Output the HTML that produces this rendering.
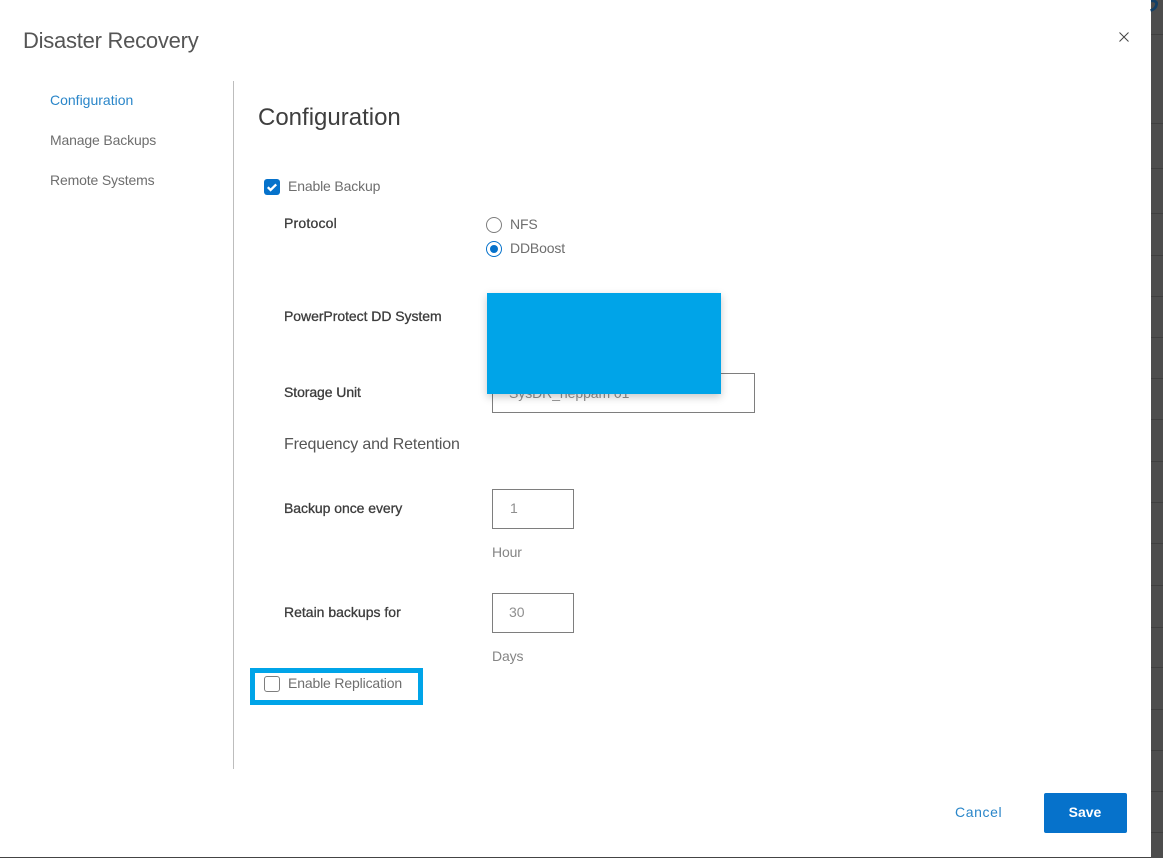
<!DOCTYPE html>
<html lang="en"><head><meta charset="utf-8"><title>Disaster Recovery</title>
<style>
html,body{margin:0;padding:0;width:1163px;height:858px;overflow:hidden;background:#fff;font-family:"Liberation Sans",sans-serif}
.a{position:absolute;white-space:nowrap;line-height:20px}
.g{color:#6e6e6e;font-size:14px;letter-spacing:-.15px}
.b{color:#3c3c3c;font-size:14px;font-weight:normal;-webkit-text-stroke:.3px #3c3c3c}
.box{position:absolute;border:1px solid #7e7e7e;box-sizing:border-box;background:#fff}
.l{position:absolute;left:1151px;width:12px;height:1px;background:#3f3f3f}
</style></head><body>
<div style="position:absolute;left:1151px;top:0;width:12px;height:858px;background:#4d4d4d"></div>
<div class="l" style="top:34px"></div><div class="l" style="top:123px"></div><div class="l" style="top:168px"></div><div class="l" style="top:213px"></div><div class="l" style="top:255px"></div><div class="l" style="top:296px"></div><div class="l" style="top:337px"></div><div class="l" style="top:378px"></div><div class="l" style="top:419px"></div><div class="l" style="top:461px"></div><div class="l" style="top:502px"></div><div class="l" style="top:543px"></div><div class="l" style="top:585px"></div><div class="l" style="top:627px"></div><div class="l" style="top:667px"></div><div class="l" style="top:709px"></div><div class="l" style="top:750px"></div><div class="l" style="top:791px"></div><div class="l" style="top:832px"></div>
<svg style="position:absolute;left:1147px;top:0" width="14" height="14" viewBox="0 0 14 14"><path d="M4 .8C8 .5 10 2 9.6 4.2C9.2 6.8 8 9.2 3.6 10.6" stroke="#123f66" stroke-width="2.8" fill="none"/></svg>
<div style="position:absolute;left:0;top:857px;width:1151px;height:1px;background:#444"></div>

<div class="a" style="left:23px;top:27px;line-height:28px;font-size:22px;color:#555;letter-spacing:-.25px">Disaster Recovery</div>
<svg style="position:absolute;left:1118px;top:31px" width="12" height="12" viewBox="0 0 12 12"><path d="M1.5 1.5L10.5 10.5M10.5 1.5L1.5 10.5" stroke="#444" stroke-width="1" fill="none"/></svg>

<div class="a" style="left:50px;top:90px;font-size:14px;color:#2a86c9">Configuration</div>
<div class="a g" style="left:50px;top:130px">Manage Backups</div>
<div class="a g" style="left:50px;top:170px">Remote Systems</div>
<div style="position:absolute;left:233px;top:81px;width:1px;height:688px;background:#bdbdbd"></div>

<div class="a" style="left:258px;top:103px;line-height:30px;font-size:24px;color:#3e3e3e">Configuration</div>

<div style="position:absolute;left:264px;top:179px;width:16px;height:16px;border-radius:3px;background:#0672cb"></div>
<svg style="position:absolute;left:264px;top:179px" width="16" height="16" viewBox="0 0 16 16"><path d="M3.8 8.2L6.6 11L12.2 5.4" stroke="#fff" stroke-width="2.3" fill="none"/></svg>
<div class="a g" style="left:288px;top:176px">Enable Backup</div>

<div class="a b" style="left:284px;top:213px;letter-spacing:.2px">Protocol</div>
<svg style="position:absolute;left:486px;top:216px" width="18" height="42" viewBox="0 0 18 42"><circle cx="8" cy="9" r="7.5" fill="#fff" stroke="#7e7e7e"/><circle cx="8" cy="33" r="7.5" fill="#fff" stroke="#0672cb"/><circle cx="8" cy="33" r="4" fill="#0672cb"/></svg>
<div class="a g" style="left:510px;top:214px">NFS</div>
<div class="a g" style="left:510px;top:238px">DDBoost</div>

<div class="a b" style="left:284px;top:306px;letter-spacing:-.05px">PowerProtect DD System</div>
<div class="a b" style="left:284px;top:382px;letter-spacing:-.08px">Storage Unit</div>
<div class="box" style="left:492px;top:373px;width:263px;height:40px"></div>
<div class="a" style="left:509px;top:383px;font-size:14px;color:#8f8f8f;letter-spacing:-.07px">SysDR_neppam 01</div>
<div style="position:absolute;left:487px;top:293px;width:234px;height:101px;background:#00a4e8;box-shadow:0 3px 8px rgba(0,0,0,.22)"></div>

<div class="a" style="left:284px;top:435px;font-size:16px;color:#555;letter-spacing:-.17px">Frequency and Retention</div>

<div class="a b" style="left:284px;top:498px;letter-spacing:-.05px">Backup once every</div>
<div class="box" style="left:492px;top:489px;width:82px;height:40px"></div>
<div class="a" style="left:510px;top:498px;font-size:14px;color:#8f8f8f">1</div>
<div class="a g" style="left:492px;top:542px;color:#858585">Hour</div>

<div class="a b" style="left:284px;top:602px">Retain backups for</div>
<div class="box" style="left:492px;top:593px;width:82px;height:40px"></div>
<div class="a" style="left:509px;top:602px;font-size:14px;color:#8f8f8f">30</div>
<div class="a g" style="left:492px;top:646px;color:#858585">Days</div>

<div style="position:absolute;left:250px;top:668px;width:173px;height:37px;border:5px solid #00a4e8;box-sizing:border-box"></div>
<div style="position:absolute;left:264px;top:676px;width:16px;height:16px;border:1px solid #7e7e7e;border-radius:3px;box-sizing:border-box;background:#fff"></div>
<div class="a g" style="left:288px;top:673px">Enable Replication</div>

<div class="a" style="left:955px;top:802px;font-size:14px;color:#2a86c9;letter-spacing:.6px">Cancel</div>
<div style="position:absolute;left:1044px;top:793px;width:83px;height:40px;border-radius:2px;background:#0672cb;color:#fff;font-size:14px;font-weight:bold;line-height:38px;text-align:center;text-indent:-1px">Save</div>
</body></html>
